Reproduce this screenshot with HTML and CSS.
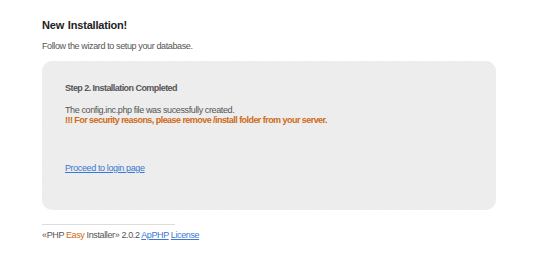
FILE: index.html
```html
<!DOCTYPE html>
<html lang="en">
<head>
    <meta charset="UTF-8" />
    <title>PHP Easy Installer</title>
    <link rel="stylesheet" href="styles.css">
</head>
<body>

<div class="wrapper">
    <h1>New Installation!</h1>
    <p class="intro">Follow the wizard to setup your database.</p>

    <div class="panel">
        <h3>Step 2. Installation Completed</h3>
        <p class="msg">
            The config.inc.php file was sucessfully created.<br>
            <span class="warn">!!! For security reasons, please remove /install folder from your server.</span>
        </p>
        <a class="proceed" href="#">Proceed to login page</a>
    </div>

    <div class="footer">
        <span class="q">&laquo;</span>PHP <span class="easy">Easy</span> Installer<span class="q">&raquo;</span> 2.0.2 <a href="#">ApPHP</a> <a href="#">License</a>
    </div>
</div>

</body>
</html>
```

FILE: styles.css
```css
* {
    box-sizing: border-box;
    margin: 0;
    padding: 0;
}

body {
    background: #fff;
    font-family: "Liberation Sans", Arial, sans-serif;
    font-size: 9px;
    letter-spacing: -0.38px;
    color: #555;
}

.wrapper {
    width: 454px;
    margin-left: 42px;
    padding-top: 18px;
}

h1 {
    font-size: 11px;
    font-weight: bold;
    letter-spacing: -0.2px;
    word-spacing: 1px;
    color: #222;
    line-height: 14px;
}

.intro {
    margin-top: 8px;
    line-height: 12px;
    color: #555;
}

/* =========================
   PANEL
========================= */
.panel {
    margin-top: 9px;
    height: 149px;
    padding: 21px 23px 0;
    border-radius: 10px;
    background-color: #eeeeee;
    background-image: repeating-linear-gradient(45deg, rgba(0,0,0,0.012) 0 1px, transparent 1px 3px);
}

.panel h3 {
    font-size: 9px;
    font-weight: bold;
    letter-spacing: -0.55px;
    color: #555;
    line-height: 12px;
}

.msg {
    margin-top: 11px;
    line-height: 10px;
    color: #555;
}

.warn {
    color: #cf6a17;
    font-weight: bold;
    letter-spacing: -0.55px;
}

.proceed {
    display: inline-block;
    margin-top: 37px;
    color: #3a78d2;
    line-height: 12px;
}

/* =========================
   FOOTER
========================= */
.footer {
    margin-top: 14px;
    width: 133px;
    padding-top: 4px;
    border-top: 1px solid #ddd;
    white-space: nowrap;
    line-height: 12px;
    color: #555;
}

.footer .easy { color: #cf6a17; }
.footer a { color: #3a78d2; }
```
